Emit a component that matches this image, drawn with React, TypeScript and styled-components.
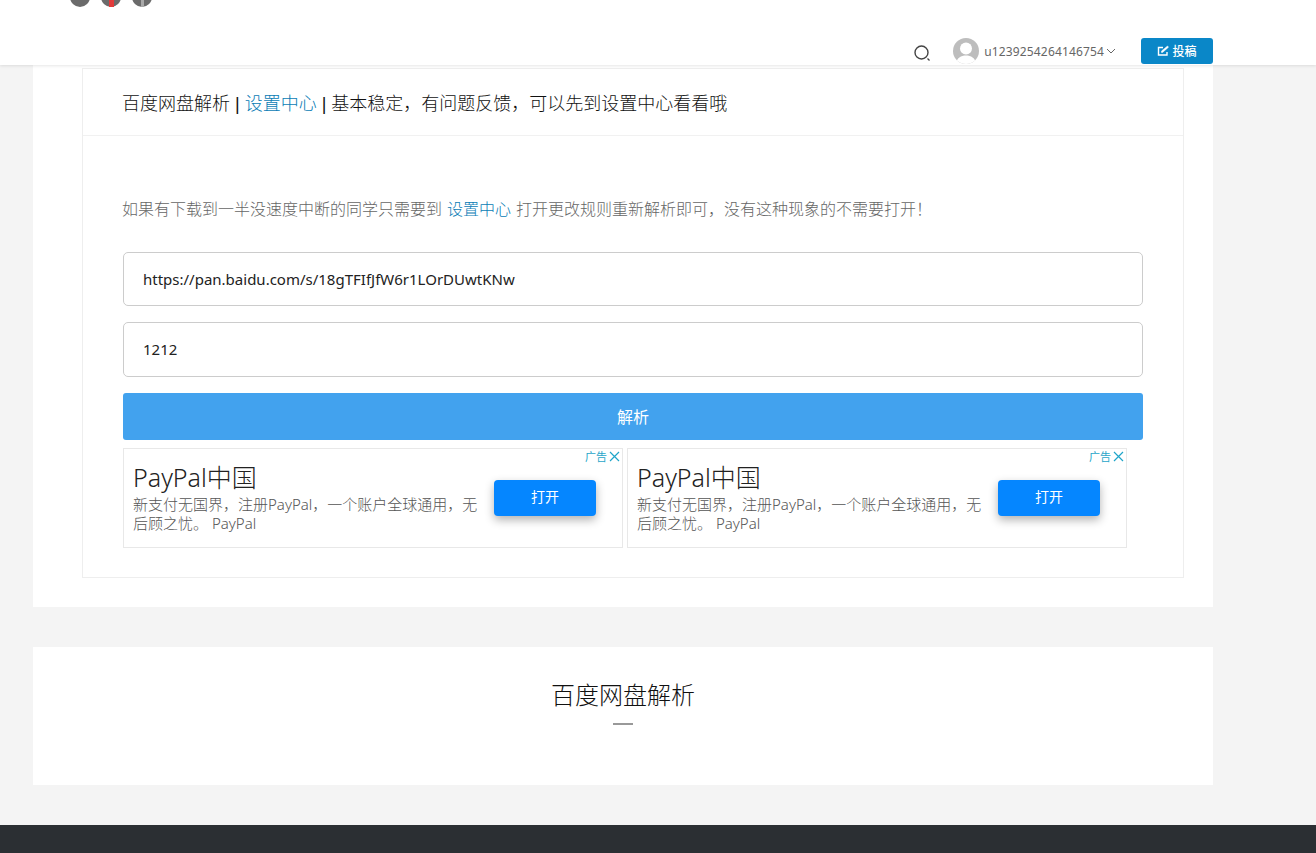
import styled, { createGlobalStyle } from "styled-components";

const FONT = `"Noto Sans", "Noto Sans CJK SC", sans-serif`;

const GlobalStyle = createGlobalStyle`
  html, body {
    margin: 0;
    padding: 0;
    background: #f4f4f4;
    font-family: ${FONT};
    overflow: hidden;
  }
  * { box-sizing: border-box; }
`;

const Page = styled.div`
  width: 1316px;
  height: 853px;
  overflow: hidden;
`;

const Header = styled.header`
  height: 65px;
  background: #fff;
  box-shadow: 0 1px 3px rgba(0, 0, 0, 0.1);
  position: relative;
  display: flex;
  flex-direction: column;
  justify-content: space-between;
  padding: 0 103px 1px 70px;
`;

const Socials = styled.div`
  display: flex;
  gap: 11px;
  margin-top: -13px;
`;

const Social = styled.span`
  width: 20px;
  height: 20px;
  border-radius: 50%;
  background: #6b6b6b;
  display: flex;
  justify-content: center;
`;

const SocialMark = styled.i<{ $accent: string; $size: number }>`
  width: ${(p) => p.$size}px;
  height: 100%;
  background: ${(p) => p.$accent};
`;

const Nav = styled.nav`
  display: flex;
  align-items: center;
  justify-content: flex-end;
  height: 26px;
`;

const SearchBtn = styled.span`
  display: flex;
  margin-right: 22px;
  margin-top: 4px;
  color: #444;
`;

const Avatar = styled.span`
  width: 26px;
  height: 26px;
  border-radius: 50%;
  background: #bdbdbd;
  overflow: hidden;
  display: block;
  margin-right: 5px;
`;

const UserName = styled.span`
  font-size: 12px;
  color: #666;
  letter-spacing: 0.15px;
`;

const Chevron = styled.span`
  display: flex;
  color: #666;
  margin: 0 25px 0 2px;
`;

const PostBtn = styled.a`
  width: 72px;
  height: 26px;
  border-radius: 3px;
  background: #0a87c8;
  color: #fff;
  font-size: 12px;
  font-weight: 500;
  display: flex;
  align-items: center;
  justify-content: center;
  gap: 3px;
`;

const Wrapper = styled.main`
  width: 1180px;
  margin-left: 33px;
`;

const Panel = styled.section`
  background: #fff;
  height: 542px;
  padding: 3px 29px 0 49px;
`;

const Card = styled.div`
  border: 1px solid #eee;
  height: 510px;
`;

const CardHead = styled.div`
  height: 67px;
  border-bottom: 1px solid #f1f1f1;
  padding-left: 39px;
  display: flex;
  align-items: center;
  white-space: pre;
  font-family: "Liberation Sans", "Noto Sans CJK SC", sans-serif;
  font-size: 18px;
  font-weight: 300;
  color: #111;
`;

const CardBody = styled.div`
  padding: 0 40px;
`;

const Link = styled.a`
  color: #0a7cb5;
`;

const Spaced = styled(Link)`
  margin: 0 5px;
`;

const Note = styled.p`
  margin: 0;
  padding-top: 62px;
  height: 116px;
  font-size: 16px;
  font-weight: 300;
  line-height: 22px;
  color: #666;
  margin-left: -1px;
`;

const Field = styled.input<{ $height: number; $lift: number }>`
  display: block;
  width: 1020px;
  height: ${(p) => p.$height}px;
  padding: 0 20px ${(p) => p.$lift}px 19px;
  border: 1px solid #ccc;
  border-radius: 5px;
  margin-bottom: 16px;
  font-family: ${FONT};
  font-size: 15px;
  color: #222;
  background: #fff;
  outline: none;
`;

const Submit = styled.button`
  display: block;
  width: 1020px;
  height: 47px;
  padding: 0 0 2px;
  border: 0;
  border-radius: 3px;
  background: #42a2ee;
  color: #fff;
  font-family: ${FONT};
  font-size: 16px;
`;

const Ads = styled.div`
  display: flex;
  gap: 4px;
  margin-top: 8px;
`;

const Ad = styled.div`
  width: 500px;
  height: 100px;
  border: 1px solid #e8e8e8;
  position: relative;
  display: flex;
  align-items: flex-start;
  padding: 13px 0 0 9px;
`;

const AdMark = styled.div`
  position: absolute;
  top: 0;
  right: 2px;
  display: flex;
  align-items: center;
  gap: 2px;
  font-size: 11px;
  line-height: 15px;
  color: #1fa5c9;
`;

const AdText = styled.div`
  width: 346px;
`;

const AdTitle = styled.div`
  font-size: 25px;
  font-weight: 300;
  line-height: 30px;
  color: #222;
`;

const AdDesc = styled.div`
  font-size: 15px;
  font-weight: 300;
  line-height: 19px;
  margin-top: 3px;
  color: #555;
`;

const AdOpen = styled.a`
  width: 102px;
  height: 36px;
  margin: 18px 0 0 15px;
  padding-bottom: 4px;
  border-radius: 4px;
  background: #0586ff;
  box-shadow: 0 4px 10px rgba(0, 0, 0, 0.3);
  color: #fff;
  font-size: 14px;
  display: flex;
  align-items: center;
  justify-content: center;
`;

const TitlePanel = styled.section`
  background: #fff;
  height: 138px;
  margin-top: 40px;
  padding-top: 30px;
  text-align: center;
`;

const Title = styled.h2`
  margin: 0;
  font-size: 24px;
  font-weight: 300;
  line-height: 36px;
  color: #111;
`;

const TitleBar = styled.div`
  width: 20px;
  height: 2px;
  background: #999;
  margin: 10px auto 0;
`;

const Footer = styled.footer`
  height: 28px;
  margin-top: 40px;
  background: #2b2f33;
`;

const ads = [0, 1];

const App = () => {
  return (
    <Page>
      <GlobalStyle />
      <Header>
        <Socials>
          <Social />
          <Social>
            <SocialMark $accent="#e23b3b" $size={5} />
          </Social>
          <Social>
            <SocialMark $accent="#a8a8a8" $size={3} />
          </Social>
        </Socials>
        <Nav>
          <SearchBtn>
            <svg width="18" height="18" viewBox="0 0 18 18" fill="none" stroke="currentColor">
              <circle cx="8.5" cy="8.5" r="6.5" strokeWidth="1.4" />
              <path d="M14.5 14.5l2 2" strokeWidth="1.2" />
            </svg>
          </SearchBtn>
          <Avatar>
            <svg width="26" height="26" viewBox="0 0 26 26">
              <circle cx="13" cy="10.5" r="6" fill="#fff" />
              <path d="M3 27c0-7 5-9.5 10-9.5S23 20 23 27z" fill="#fff" />
            </svg>
          </Avatar>
          <UserName>u1239254264146754</UserName>
          <Chevron>
            <svg width="10" height="10" viewBox="0 0 10 10" fill="none" stroke="currentColor">
              <path d="M1 3l4 4 4-4" />
            </svg>
          </Chevron>
          <PostBtn>
            <svg width="12" height="12" viewBox="0 0 12 12" fill="none" stroke="#fff" strokeWidth="1.4">
              <path d="M10 7v3H1.5V2.5H6" />
              <path d="M4.5 7.5V6l6-5 1 1.2-6 5.3z" fill="#fff" strokeWidth="0.5" />
            </svg>
            投稿
          </PostBtn>
        </Nav>
      </Header>
      <Wrapper>
        <Panel>
          <Card>
            <CardHead>
              {"百度网盘解析 | "}
              <Link>设置中心</Link>
              {" | 基本稳定，有问题反馈，可以先到设置中心看看哦"}
            </CardHead>
            <CardBody>
              <Note>
                如果有下载到一半没速度中断的同学只需要到<Spaced>设置中心</Spaced>打开更改规则重新解析即可，没有这种现象的不需要打开！
              </Note>
              <Field $height={54} $lift={0} readOnly value="https://pan.baidu.com/s/18gTFIfJfW6r1LOrDUwtKNw" />
              <Field $height={55} $lift={2} readOnly value="1212" />
              <Submit>解析</Submit>
              <Ads>
                {ads.map((q) => (
                  <Ad key={q}>
                    <AdMark>
                      广告
                      <svg width="11" height="11" viewBox="0 0 11 11" stroke="#1fa5c9" strokeWidth="1.2">
                        <path d="M1 1l9 9M10 1l-9 9" />
                      </svg>
                    </AdMark>
                    <AdText>
                      <AdTitle>PayPal中国</AdTitle>
                      <AdDesc>新支付无国界，注册PayPal，一个账户全球通用，无后顾之忧。 PayPal</AdDesc>
                    </AdText>
                    <AdOpen>打开</AdOpen>
                  </Ad>
                ))}
              </Ads>
            </CardBody>
          </Card>
        </Panel>
        <TitlePanel>
          <Title>百度网盘解析</Title>
          <TitleBar />
        </TitlePanel>
      </Wrapper>
      <Footer />
    </Page>
  );
};

export default App;
